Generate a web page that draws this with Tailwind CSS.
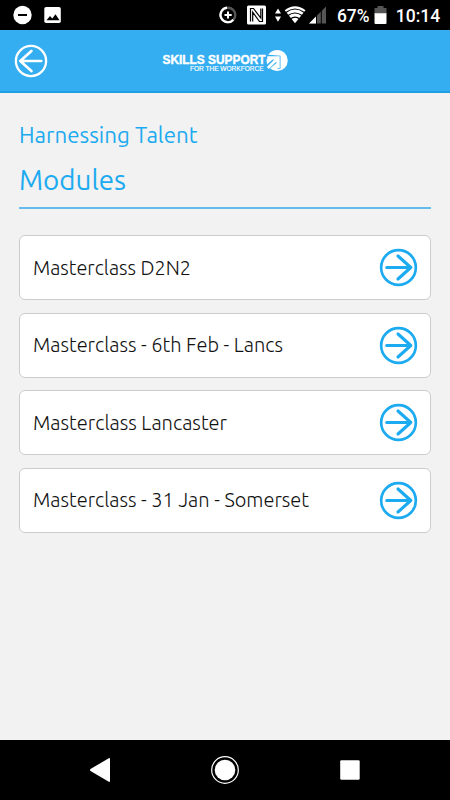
<!DOCTYPE html>
<html lang="en">
<head>
<meta charset="utf-8">
<title>Modules</title>
<script src="https://cdn.jsdelivr.net/npm/@tailwindcss/browser@4"></script>
</head>
<body class="w-[450px] h-[800px] overflow-hidden bg-[#f2f2f2] flex flex-col font-['Ubuntu','Noto_Sans',sans-serif]">
<svg class="hidden">
  <symbol id="arrow" viewBox="0 0 38 38"><g fill="none" stroke="currentColor" stroke-width="2.6" stroke-linecap="round"><circle cx="19" cy="19" r="16.9"/><path d="M7.5 19H31M18.5 7.8L31 19L18.5 30.2" stroke-width="3" stroke-linejoin="round"/></g></symbol>
</svg>
<div class="h-[30px] shrink-0 bg-black">
  <svg width="450" height="30" viewBox="0 0 450 30" fill="#fff">
    <circle cx="22.500" cy="15" r="9.200"/><path d="M18 14h9v2h-9z" fill="#000"/>
    <rect x="44.300" y="7" width="16.500" height="16" rx="1.800"/><path d="M46.500 20.300l3.500-4.300 2.300 2.500 3.200-4.300 4 6.100z" fill="#000"/>
    <circle cx="228" cy="15" r="7.300" fill="none" stroke="#555" stroke-width="2.400"/>
    <path d="M227 7.700a7.300 7.300 0 1 0 6.300 12" fill="none" stroke="#fff" stroke-width="2.200"/>
    <path d="M224.500 14h2.500v-2.600h2V14h2.700v2H229v2.600h-2V16h-2.500z"/>
    <rect x="247" y="5.500" width="19" height="19" rx="1.500"/>
    <path d="M250.500 21.500V8.500h3l7.300 9.500V8.500M262.500 8.500v13h-3l-6.800-9.300v9.300" fill="none" stroke="#000" stroke-width="1.200"/>
    <path d="M278 8.500l3 5h-6zM278 21.700l3-5.200h-6z"/>
    <path d="M284.700 10.300Q295 2.300 305.500 10.300L295 23.300z"/>
    <path d="M285.800 12.500Q295 5.500 304.400 12.500M288 15.600Q295 10.400 302 15.600M290.600 18.800Q295 15.500 299.600 18.800" fill="none" stroke="#000" stroke-width="1.200"/>
    <path d="M309 23.500L326 6.500v17z" fill="#555"/><path d="M309 23.500l7-7v7z"/>
    <path d="M316.500 8v16M321.300 8v16" stroke="#000" stroke-width="1"/>
    <text x="337" y="21.800" font-family="Roboto, sans-serif" font-size="18" font-weight="500" textLength="32.500" lengthAdjust="spacingAndGlyphs">67%</text>
    <path d="M374.500 8h3V6h6v2h3v6h-12z" fill="#555"/><path d="M374.500 13.300h12v9.700q0 1-1 1h-10q-1 0-1-1z"/>
    <text x="395.800" y="21.800" font-family="Roboto, sans-serif" font-size="19" font-weight="500" textLength="44.500" lengthAdjust="spacingAndGlyphs">10:14</text>
  </svg>
</div>
<header class="h-[63px] shrink-0 bg-[#34aef0] border-b-2 border-[#1e9fe4] relative flex items-center justify-center text-white">
  <svg class="absolute left-[14px] top-[14px] rotate-180" width="34" height="34"><use href="#arrow"/></svg>
  <svg width="130" height="28" viewBox="160 48 130 28" fill="#fff" font-family="'Liberation Sans', sans-serif">
    <text x="162.500" y="65.300" font-size="12.500" font-weight="bold" stroke="#fff" stroke-width=".4" textLength="103" lengthAdjust="spacingAndGlyphs">SKILLS SUPPORT</text>
    <text x="190" y="72" font-size="7" stroke="#fff" stroke-width=".15" textLength="73.500" lengthAdjust="spacingAndGlyphs">FOR THE WORKFORCE</text>
    <circle cx="277.200" cy="61.500" r="10.600"/>
    <path d="M266 55.500l14.500 1.300v13l-3 .4.200-7.200-9.700 8.300-3-4 8.200-7.300H266z" fill="#34aef0"/>
    <path d="M267.300 57.200h12.400v12h-3.300v-6.800l-7.600 7.700-1.900-2 7.500-7.500h-7.100z"/>
  </svg>
</header>
<main class="flex-1 px-[19px] pt-[27px] text-[#1caaf0]">
  <h2 class="h-[30px] leading-[30px] text-[21.500px] whitespace-nowrap"><svg class="block overflow-visible" width="180" height="30" fill="currentColor"><text x="0" y="22.500" textLength="178.500" lengthAdjust="spacingAndGlyphs">Harnessing Talent</text></svg></h2>
  <h1 class="mt-[11px] h-[48px] border-b-2 border-[#65baef] text-[28px]"><svg class="block overflow-visible" width="110" height="40" fill="currentColor"><text x="0" y="29" textLength="107" lengthAdjust="spacingAndGlyphs">Modules</text></svg></h1>
  <div class="mt-[26px] flex flex-col gap-[12.500px]">
    <div class="h-[65px] box-border rounded-[6px] border-[1.500px] border-[#ccc] bg-white flex items-center justify-between pl-[13px] pr-[12px]">
      <svg class="overflow-visible text-[20.500px] font-light" width="159" height="30" fill="#111"><text x="0" y="21.500" textLength="158" lengthAdjust="spacingAndGlyphs">Masterclass D2N2</text></svg>
      <svg width="39" height="39"><use href="#arrow"/></svg>
    </div>
    <div class="h-[65px] box-border rounded-[6px] border-[1.500px] border-[#ccc] bg-white flex items-center justify-between pl-[13px] pr-[12px]">
      <svg class="overflow-visible text-[20.500px] font-light" width="251" height="30" fill="#111"><text x="0" y="21.500" textLength="250" lengthAdjust="spacingAndGlyphs">Masterclass - 6th Feb - Lancs</text></svg>
      <svg width="39" height="39"><use href="#arrow"/></svg>
    </div>
    <div class="h-[65px] box-border rounded-[6px] border-[1.500px] border-[#ccc] bg-white flex items-center justify-between pl-[13px] pr-[12px]">
      <svg class="overflow-visible text-[20.500px] font-light" width="195" height="30" fill="#111"><text x="0" y="21.500" textLength="194" lengthAdjust="spacingAndGlyphs">Masterclass Lancaster</text></svg>
      <svg width="39" height="39"><use href="#arrow"/></svg>
    </div>
    <div class="h-[65px] box-border rounded-[6px] border-[1.500px] border-[#ccc] bg-white flex items-center justify-between pl-[13px] pr-[12px]">
      <svg class="overflow-visible text-[20.500px] font-light" width="277" height="30" fill="#111"><text x="0" y="21.500" textLength="276" lengthAdjust="spacingAndGlyphs">Masterclass - 31 Jan - Somerset</text></svg>
      <svg width="39" height="39"><use href="#arrow"/></svg>
    </div>
  </div>
</main>
<nav class="h-[60px] shrink-0 bg-black">
  <svg width="450" height="60" fill="#fff">
    <path d="M90.500 29L108.800 18.200q1.200-.5 1.200.8v22q0 1.300-1.200.8L90.500 31q-1-1 0-2z"/>
    <circle cx="225" cy="30" r="10.300"/><circle cx="225" cy="30" r="13.300" fill="none" stroke="#fff" stroke-width="1.200"/>
    <rect x="340.200" y="20.200" width="19.500" height="19.500" rx="1.200"/>
  </svg>
</nav>
</body>
</html>
